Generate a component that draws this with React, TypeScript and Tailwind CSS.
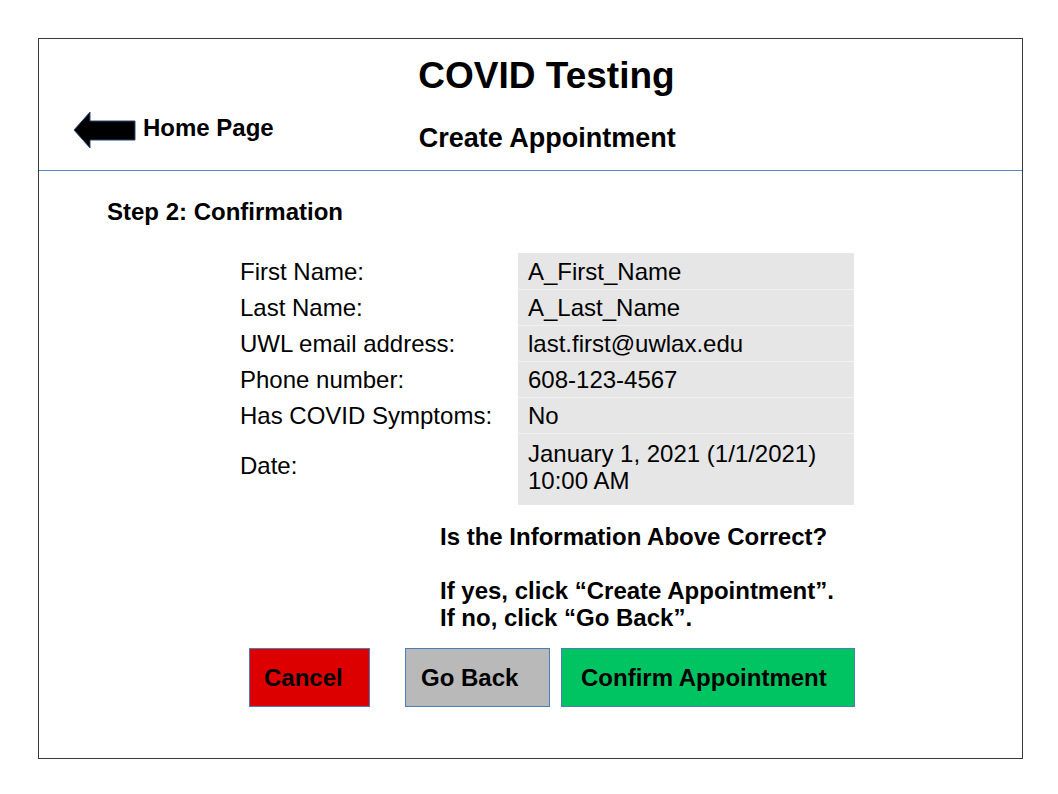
const rows: { label: string; value: string[] }[] = [
  { label: "First Name:", value: ["A_First_Name"] },
  { label: "Last Name:", value: ["A_Last_Name"] },
  { label: "UWL email address:", value: ["last.first@uwlax.edu"] },
  { label: "Phone number:", value: ["608-123-4567"] },
  { label: "Has COVID Symptoms:", value: ["No"] },
  { label: "Date:", value: ["January 1, 2021 (1/1/2021)", "10:00 AM"] },
];

const BackArrow = () => (
  <svg width="64" height="40" viewBox="0 0 64 40">
    <polygon
      points="2,20 18,2 18,11 63,11 63,30 18,30 18,38"
      fill="#000"
      stroke="#2a4a78"
      strokeWidth="1"
    />
  </svg>
);

export default function App() {
  return (
    <div className="min-h-[794px] w-[1058px] bg-white pt-[38px] pl-[38px] font-['Liberation_Sans',Arial,sans-serif] text-black">
      <div className="w-[985px] h-[721px] border border-[#3a3a3a] flex flex-col">
        {/* header */}
        <header className="h-[132px] border-b border-[#5a86c5] flex flex-col">
          <h1 className="mt-[18px] pl-[32px] text-center text-[37px] font-bold leading-none">
            COVID Testing
          </h1>
          <div className="mt-[16px] flex items-start pl-[33px]">
            <a href="#" className="flex items-center">
              <BackArrow />
              <span className="ml-[7px] pb-[4px] text-[24px] font-bold leading-none">
                Home Page
              </span>
            </a>
            <h2 className="ml-[145px] mt-[15px] text-[27px] font-bold leading-none">
              Create Appointment
            </h2>
          </div>
        </header>

        {/* body */}
        <main className="flex flex-col">
          <h3 className="mt-[29px] ml-[68px] text-[24px] font-bold leading-none">
            Step 2: Confirmation
          </h3>

          <div className="mt-[29px] ml-[201px] grid grid-cols-[278px_336px] text-[24px]">
            {rows.map((row, i) => {
              const tall = row.value.length > 1;
              return (
                <div key={row.label} className="contents">
                  <div
                    className={`flex items-center leading-none ${
                      tall ? "h-[72px] pb-[8px]" : "h-[36px] pt-[1px]"
                    } ${i > 0 ? "border-t border-transparent" : ""}`}
                  >
                    {row.label}
                  </div>
                  <div
                    className={`bg-[#e6e6e6] pl-[10px] ${
                      tall
                        ? "h-[72px] pt-[6px] leading-[27px]"
                        : "h-[36px] pt-[1px] flex items-center leading-none"
                    } ${i > 0 ? "border-t border-[#f1f1f1]" : ""}`}
                  >
                    {row.value.map((v) => (
                      <div key={v}>{v}</div>
                    ))}
                  </div>
                </div>
              );
            })}
          </div>

          <div className="mt-[18px] ml-[401px] text-[24px] font-bold leading-[27px]">
            <p>Is the Information Above Correct?</p>
            <p>&nbsp;</p>
            <p>If yes, click “Create Appointment”.</p>
            <p>If no, click “Go Back”.</p>
          </div>

          <div className="mt-[17px] ml-[210px] flex text-[24px] font-bold">
            <button className="h-[59px] w-[121px] border border-[#4a7ebb] bg-[#dd0000] pl-[14px] text-left">
              Cancel
            </button>
            <button className="ml-[35px] h-[59px] w-[145px] border border-[#4a7ebb] bg-[#b9b9b9] pl-[15px] text-left">
              Go Back
            </button>
            <button className="ml-[11px] h-[59px] w-[294px] border border-[#4a7ebb] bg-[#00c462] pl-[19px] text-left">
              Confirm Appointment
            </button>
          </div>
        </main>
      </div>
    </div>
  );
}
